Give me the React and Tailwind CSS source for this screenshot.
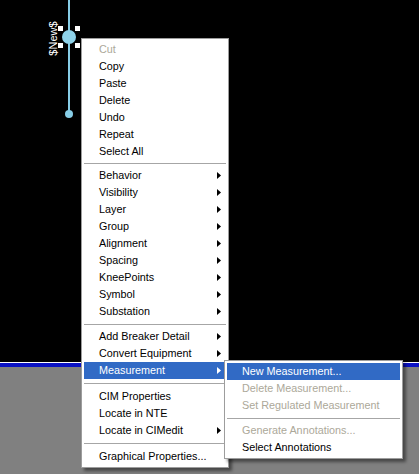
import React from 'react';

const MAIN_MENU = [
  { label: 'Cut', disabled: true },
  { label: 'Copy' },
  { label: 'Paste' },
  { label: 'Delete' },
  { label: 'Undo' },
  { label: 'Repeat' },
  { label: 'Select All' },
  { sep: true, h: 'h-[7px]' },
  { label: 'Behavior', sub: true },
  { label: 'Visibility', sub: true },
  { label: 'Layer', sub: true },
  { label: 'Group', sub: true },
  { label: 'Alignment', sub: true },
  { label: 'Spacing', sub: true },
  { label: 'KneePoints', sub: true },
  { label: 'Symbol', sub: true },
  { label: 'Substation', sub: true },
  { sep: true, h: 'h-[8px]' },
  { label: 'Add Breaker Detail', sub: true },
  { label: 'Convert Equipment', sub: true },
  { label: 'Measurement', sub: true, active: true },
  { sep: true, h: 'h-[9px]' },
  { label: 'CIM Properties' },
  { label: 'Locate in NTE' },
  { label: 'Locate in CIMedit', sub: true },
  { sep: true, h: 'h-[9px]' },
  { label: 'Graphical Properties...' },
];

const SUB_MENU = [
  { label: 'New Measurement...', active: true },
  { label: 'Delete Measurement...', disabled: true },
  { label: 'Set Regulated Measurement', disabled: true },
  { sep: true, h: 'h-[8px]' },
  { label: 'Generate Annotations...', disabled: true },
  { label: 'Select Annotations' },
];

// small black triangle used for submenu entries
const Arrow = ({ white }) => (
  <svg width="4" height="7" viewBox="0 0 4 7" className="shrink-0">
    <polygon points="0,0 4,3.5 0,7" fill={white ? '#ffffff' : '#000000'} />
  </svg>
);

const MenuRow = ({ item }) => {
  if (item.sep) {
    return (
      <div className={`${item.h} flex items-center`}>
        <div className="w-full h-px bg-[#a6a6a6]"></div>
      </div>
    );
  }
  const color = item.active ? 'bg-[#316ac5] text-white' : item.disabled ? 'text-[#aca899]' : 'text-black';
  return (
    <div className={`h-[17px] flex items-center pl-[15px] pr-[5px] ${color}`}>
      <span className="flex-1 whitespace-nowrap leading-none">{item.label}</span>
      {item.sub && <Arrow white={item.active} />}
    </div>
  );
};

const Menu = ({ items, className }) => (
  <div className={`absolute bg-white border border-[#9d9d9d] p-[2px] shadow-[3px_3px_3px_rgba(0,0,0,0.45)] text-[10.8px] font-['Liberation_Sans',Arial,sans-serif] ${className}`}>
    {items.map((item, i) => (
      <MenuRow key={i} item={item} />
    ))}
  </div>
);

// selected node on the diagram: round symbol with four grab handles
const SelectedNode = () => (
  <div className="absolute left-[58px] top-[26px] w-[22px] h-[22px] flex flex-col justify-between">
    <div className="absolute inset-[4px] rounded-full bg-[#8fd3ea]"></div>
    <div className="flex justify-between">
      <div className="w-[5px] h-[5px] bg-white"></div>
      <div className="w-[5px] h-[5px] bg-white"></div>
    </div>
    <div className="flex justify-between">
      <div className="w-[5px] h-[5px] bg-white"></div>
      <div className="w-[5px] h-[5px] bg-white"></div>
    </div>
  </div>
);

export default function App() {
  return (
    <div className="relative w-[419px] h-[474px] overflow-hidden flex flex-col bg-[#808080] font-['Liberation_Sans',Arial,sans-serif]">
      {/* diagram canvas */}
      <div className="relative h-[362px] bg-black shrink-0">
        <div className="absolute left-[65px] top-0 w-[8px] flex flex-col items-center">
          <div className="w-[2px] h-[112px] bg-[#87cde6]"></div>
          <div className="w-[8px] h-[8px] -mt-[2px] rounded-full bg-[#87cde6]"></div>
        </div>
        <SelectedNode />
        <div className="absolute left-[33px] top-[33px] w-[40px] h-[11px] flex items-center justify-center -rotate-90 text-white text-[11px] leading-none">
          $New$
        </div>
      </div>
      <div className="h-px bg-white shrink-0"></div>
      <div className="h-[4px] bg-[#0b12c4] shrink-0"></div>
      <div className="flex-1 bg-[#808080]"></div>

      {/* context menus */}
      <Menu items={MAIN_MENU} className="left-[81px] top-[38px] w-[148px]" />
      <Menu items={SUB_MENU} className="left-[224px] top-[360px] w-[179px]" />
    </div>
  );
}
